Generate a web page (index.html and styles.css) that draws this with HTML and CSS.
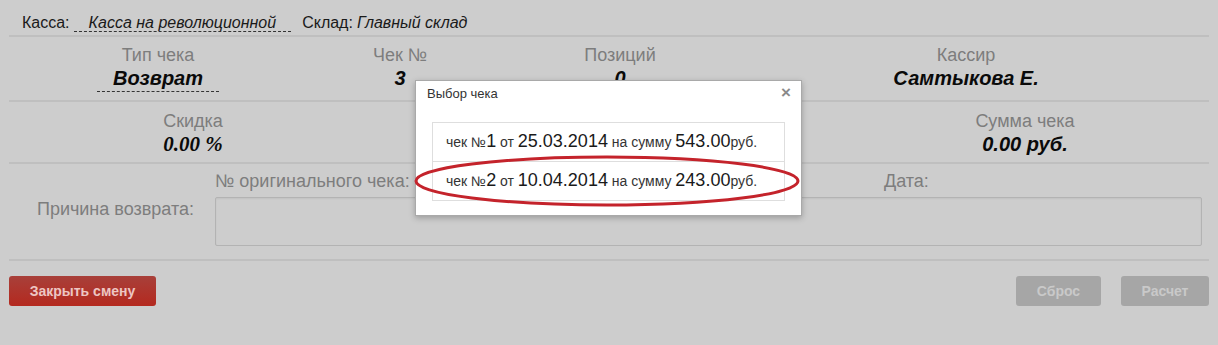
FILE: index.html
```html
<!DOCTYPE html>
<html lang="ru">
<head>
<meta charset="utf-8">
<title>Возврат</title>
<link rel="stylesheet" href="styles.css">
</head>
<body>
<div class="page">
  <div class="topbar">
    <span class="top-label">Касса:</span>
    <span class="top-select">Касса на революционной</span>
    <span class="top-label store">Склад:</span>
    <span class="top-value">Главный склад</span>
  </div>

  <div class="row row-info">
    <div class="cell">
      <div class="cap">Тип чека</div>
      <div class="val"><span class="val-select">Возврат</span></div>
    </div>
    <div class="cell">
      <div class="cap">Чек №</div>
      <div class="val">3</div>
    </div>
    <div class="cell">
      <div class="cap">Позиций</div>
      <div class="val">0</div>
    </div>
    <div class="cell">
      <div class="cap">Кассир</div>
      <div class="val">Самтыкова Е.</div>
    </div>
    <div class="cell"></div>
  </div>

  <div class="row row-sum">
    <div class="cell">
      <div class="cap">Скидка</div>
      <div class="val serif">0.00 %</div>
    </div>
    <div class="cell"></div>
    <div class="cell">
      <div class="cap">Сумма чека</div>
      <div class="val">0.00 руб.</div>
    </div>
  </div>

  <div class="row row-return">
    <div class="ret-spacer"></div>
    <div class="ret-head">
      <span class="cap">№ оригинального чека:</span>
      <span class="cap">Дата:</span>
    </div>
    <div class="ret-label cap">Причина возврата:</div>
    <div class="ret-field"><textarea class="ret-input"></textarea></div>
  </div>

  <div class="actions">
    <button class="btn btn-red">Закрыть смену</button>
    <div class="actions-right">
      <button class="btn btn-gray btn-reset">Сброс</button>
      <button class="btn btn-gray btn-calc">Расчет</button>
    </div>
  </div>
</div>

<div class="modal">
  <div class="modal-head">
    <span class="modal-title">Выбор чека</span>
    <span class="modal-close">×</span>
  </div>
  <ul class="check-list">
    <li class="check-item">чек №<span class="big">1</span> от <span class="big">25.03.2014</span> на сумму <span class="big">543.00</span>руб.</li>
    <li class="check-item">чек №<span class="big">2</span> от <span class="big">10.04.2014</span> на сумму <span class="big">243.00</span>руб.</li>
  </ul>
</div>

<svg class="highlight" width="400" height="60" viewBox="0 0 400 60">
  <ellipse cx="195" cy="29" rx="191" ry="24" fill="none" stroke="#c4232b" stroke-width="3"/>
</svg>
</body>
</html>
```

FILE: styles.css
```css
html, body {
  margin: 0;
  padding: 0;
}
body {
  background: #cdcdcd;
  font-family: "Liberation Sans", Arial, sans-serif;
  color: #111;
  width: 1218px;
  height: 345px;
  overflow: hidden;
  position: relative;
}
.page {
  padding: 0 9px;
}

/* top bar */
.topbar {
  box-sizing: border-box;
  height: 37px;
  padding: 13px 0 0 13px;
  font-size: 16px;
  line-height: 20px;
  border-bottom: 2px solid #bfbfbf;
  display: flex;
  align-items: baseline;
  white-space: nowrap;
}
.top-label {
  color: #1a1a1a;
}
.top-select {
  font-style: italic;
  color: #1a1a1a;
  margin-left: 4px;
  padding: 0 15px;
  line-height: 17px;
  border-bottom: 1px dashed #333;
}
.top-label.store {
  margin-left: 11px;
}
.top-value {
  font-style: italic;
  color: #1a1a1a;
  margin-left: 4px;
}

/* rows */
.row {
  box-sizing: border-box;
  border-bottom: 2px solid #bfbfbf;
}
.cell {
  text-align: center;
}
.cap {
  font-size: 18px;
  line-height: 20px;
  color: #7d7d7d;
}
.val {
  font-size: 20px;
  line-height: 26px;
  font-weight: bold;
  font-style: italic;
  color: #0a0a0a;
}
.val.serif {
  font-family: "Liberation Serif", "Times New Roman", serif;
  font-size: 21px;
}
.val-select {
  display: inline-block;
  padding: 0 16px;
  border-bottom: 1px dashed #333;
}

.row-info {
  height: 65px;
  padding-top: 8px;
  display: grid;
  grid-template-columns: 298px 186px 254px 438px 1fr;
}
.row-sum {
  height: 62px;
  padding-top: 9px;
  display: grid;
  grid-template-columns: 368px 1fr 368px;
}
.row-return {
  height: 97px;
  padding-top: 7px;
  display: grid;
  grid-template-columns: 206px 1fr;
  grid-template-rows: 20px auto;
  row-gap: 6px;
}
.ret-head {
  display: grid;
  grid-template-columns: 669px 1fr;
}
.ret-label {
  text-align: right;
  padding-right: 21px;
  padding-top: 2px;
}
.ret-field {
  padding-right: 7px;
}
.ret-input {
  display: block;
  box-sizing: border-box;
  width: 100%;
  height: 49px;
  margin: 0;
  border: 1px solid #b3b3b3;
  border-radius: 2px;
  background: #cdcdcd;
  box-shadow: inset 0 1px 2px rgba(0, 0, 0, 0.06);
  resize: none;
}

/* actions */
.actions {
  margin-top: 15px;
  display: flex;
  justify-content: space-between;
}
.actions-right {
  display: flex;
  gap: 20px;
}
.btn {
  box-sizing: border-box;
  height: 30px;
  border: none;
  border-radius: 3px;
  font-family: "Liberation Sans", Arial, sans-serif;
  font-size: 14px;
  font-weight: bold;
  padding: 0;
}
.btn-red {
  width: 147px;
  background: linear-gradient(#a8403a, #b4291f);
  color: #edc6c3;
}
.btn-gray {
  background: #a6a6a6;
  color: #c9c9c9;
}
.btn-reset {
  width: 85px;
}
.btn-calc {
  width: 88px;
}

/* modal */
.modal {
  position: absolute;
  left: 415px;
  top: 80px;
  width: 387px;
  height: 136px;
  box-sizing: border-box;
  background: #fff;
  border: 1px solid #a9a9a9;
  box-shadow: 0 2px 6px rgba(0, 0, 0, 0.25);
  padding: 0 16px 0 16px;
}
.modal-head {
  display: flex;
  justify-content: space-between;
  align-items: baseline;
  padding: 4px 0 0 0;
  height: 37px;
  box-sizing: border-box;
}
.modal-title {
  font-size: 13px;
  line-height: 16px;
  color: #333;
  margin-left: -5px;
}
.modal-close {
  font-size: 17px;
  line-height: 16px;
  font-weight: bold;
  color: #8a8a8a;
  margin-right: -6px;
}
.check-list {
  list-style: none;
  margin: 4px 0 0 0;
  padding: 0;
  border: 1px solid #dedede;
}
.check-item {
  height: 38px;
  line-height: 38px;
  padding-left: 13px;
  font-size: 14px;
  color: #333;
  white-space: nowrap;
}
.check-item + .check-item {
  border-top: 1px solid #dedede;
}
.big {
  font-size: 18px;
  line-height: 1;
  color: #1a1a1a;
}

/* highlight ellipse */
.highlight {
  position: absolute;
  left: 412px;
  top: 152px;
}
```
